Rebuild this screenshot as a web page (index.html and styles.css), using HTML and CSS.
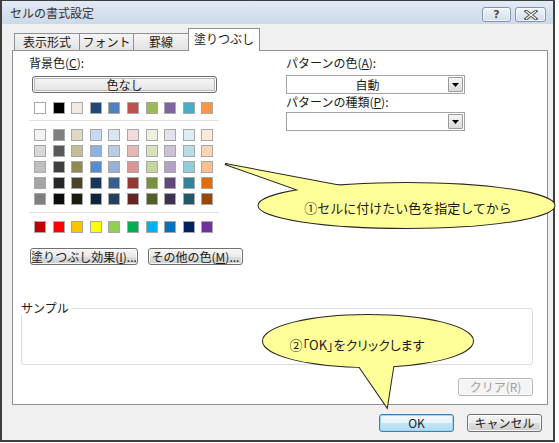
FILE: index.html
```html
<!DOCTYPE html>
<html lang="ja">
<head>
<meta charset="utf-8">
<title>セルの書式設定</title>
<link rel="stylesheet" href="styles.css">
</head>
<body>
<div class="dialog">
  <div class="titlebar">
    <span class="title">セルの書式設定</span>
    <span class="tb-btn help">?</span>
    <span class="tb-btn close">
      <svg width="14" height="10" viewBox="0 0 14 10"><path d="M2 1 L12 9 M12 1 L2 9" stroke="#555" stroke-width="3.2" stroke-linecap="square"/><path d="M2 1 L12 9 M12 1 L2 9" stroke="#f4f6f9" stroke-width="1.2"/></svg>
    </span>
  </div>
  <div class="tabs">
    <div class="tab t1">表示形式</div>
    <div class="tab t2">フォント</div>
    <div class="tab t3">罫線</div>
    <div class="tab t4 active">塗りつぶし</div>
  </div>
  <div class="panel">
    <div class="top">
      <div class="leftcol">
        <div class="label">背景色(<u>C</u>):</div>
        <div class="nocolor">色なし</div>
        <div class="swrow theme">
          <span class="sw" style="background:#FFFFFF"></span><span class="sw" style="background:#000000"></span><span class="sw" style="background:#EEECE1"></span><span class="sw" style="background:#1F497D"></span><span class="sw" style="background:#4F81BD"></span><span class="sw" style="background:#C0504D"></span><span class="sw" style="background:#9BBB59"></span><span class="sw" style="background:#8064A2"></span><span class="sw" style="background:#4BACC6"></span><span class="sw" style="background:#F79646"></span>
        </div>
        <div class="sep sep1"></div>
        <div class="swrow grid">
          <span class="sw" style="background:#F2F2F2"></span><span class="sw" style="background:#7F7F7F"></span><span class="sw" style="background:#DDD9C3"></span><span class="sw" style="background:#C6D9F0"></span><span class="sw" style="background:#DBE5F1"></span><span class="sw" style="background:#F2DCDB"></span><span class="sw" style="background:#EBF1DD"></span><span class="sw" style="background:#E5E0EC"></span><span class="sw" style="background:#DBEEF3"></span><span class="sw" style="background:#FDEADA"></span>
          <span class="sw" style="background:#D8D8D8"></span><span class="sw" style="background:#595959"></span><span class="sw" style="background:#C4BD97"></span><span class="sw" style="background:#8DB3E2"></span><span class="sw" style="background:#B8CCE4"></span><span class="sw" style="background:#E5B9B7"></span><span class="sw" style="background:#D7E3BC"></span><span class="sw" style="background:#CCC1D9"></span><span class="sw" style="background:#B7DDE8"></span><span class="sw" style="background:#FBD5B5"></span>
          <span class="sw" style="background:#BFBFBF"></span><span class="sw" style="background:#3F3F3F"></span><span class="sw" style="background:#938953"></span><span class="sw" style="background:#548DD4"></span><span class="sw" style="background:#95B3D7"></span><span class="sw" style="background:#D99694"></span><span class="sw" style="background:#C3D69B"></span><span class="sw" style="background:#B2A2C7"></span><span class="sw" style="background:#92CDDC"></span><span class="sw" style="background:#FAC08F"></span>
          <span class="sw" style="background:#A5A5A5"></span><span class="sw" style="background:#262626"></span><span class="sw" style="background:#494429"></span><span class="sw" style="background:#17365D"></span><span class="sw" style="background:#366092"></span><span class="sw" style="background:#953734"></span><span class="sw" style="background:#76923C"></span><span class="sw" style="background:#5F497A"></span><span class="sw" style="background:#31859B"></span><span class="sw" style="background:#E36C09"></span>
          <span class="sw" style="background:#7F7F7F"></span><span class="sw" style="background:#0C0C0C"></span><span class="sw" style="background:#1D1B10"></span><span class="sw" style="background:#0F243E"></span><span class="sw" style="background:#244061"></span><span class="sw" style="background:#632423"></span><span class="sw" style="background:#4F6128"></span><span class="sw" style="background:#3F3151"></span><span class="sw" style="background:#205867"></span><span class="sw" style="background:#974806"></span>
        </div>
        <div class="sep sep2"></div>
        <div class="swrow standard">
          <span class="sw" style="background:#C00000"></span><span class="sw" style="background:#FF0000"></span><span class="sw" style="background:#FFC000"></span><span class="sw" style="background:#FFFF00"></span><span class="sw" style="background:#92D050"></span><span class="sw" style="background:#00B050"></span><span class="sw" style="background:#00B0F0"></span><span class="sw" style="background:#0070C0"></span><span class="sw" style="background:#002060"></span><span class="sw" style="background:#7030A0"></span>
        </div>
        <div class="btnrow">
          <div class="btn b-effect">塗りつぶし効果(<u>I</u>)...</div>
          <div class="btn b-other">その他の色(<u>M</u>)...</div>
        </div>
      </div>
      <div class="rightcol">
        <div class="label">パターンの色(<u>A</u>):</div>
        <div class="combo c1"><span class="cval">自動</span><span class="carrow"><svg width="7" height="4" viewBox="0 0 7 4"><path d="M0 0 H7 L3.5 4 Z" fill="#000"/></svg></span></div>
        <div class="label l2">パターンの種類(<u>P</u>):</div>
        <div class="combo c2"><span class="cval"></span><span class="carrow"><svg width="7" height="4" viewBox="0 0 7 4"><path d="M0 0 H7 L3.5 4 Z" fill="#000"/></svg></span></div>
      </div>
    </div>
    <fieldset class="sample">
      <legend>サンプル</legend>
    </fieldset>
    <div class="clearrow">
      <div class="btn clear">クリア(R)</div>
    </div>
  </div>
  <div class="footer">
    <div class="btn ok">OK</div>
    <div class="btn cancel">キャンセル</div>
  </div>
</div>
<svg class="overlay" width="559" height="443" viewBox="0 0 559 443">
  <g class="co-outline">
    <polygon points="225,164 347,187 304,192"/>
    <ellipse cx="406.5" cy="205.5" rx="148" ry="22.5"/>
    <polygon points="356,362 394,362 387,407"/>
    <ellipse cx="368" cy="341" rx="105" ry="26"/>
  </g>
  <g class="co-fill">
    <polygon points="225,164 347,187 304,192"/>
    <ellipse cx="406.5" cy="205.5" rx="148" ry="22.5"/>
    <polygon points="356,362 394,362 387,407"/>
    <ellipse cx="368" cy="341" rx="105" ry="26"/>
  </g>
  <text class="co-text" x="408" y="207">①セルに付けたい色を指定してから</text>
  <text class="co-text co-text2" x="357" y="344">②「OK」をクリックします</text>
</svg>
</body>
</html>
```
FILE: styles.css
```css
* { box-sizing: border-box; }
html, body { margin: 0; padding: 0; }
body {
  width: 559px;
  height: 443px;
  background: #ffffff;
  font-family: "Noto Sans CJK JP", "Noto Sans", sans-serif;
  font-size: 12px;
  color: #1a1a1a;
  position: relative;
  overflow: hidden;
}
u { text-decoration: underline; text-underline-offset: 1px; }

.dialog {
  width: 555px;
  height: 442px;
  border: 2px solid #3f3f3f;
  border-top-width: 1px;
  background: #f0f0f0;
  display: flex;
  flex-direction: column;
}

.titlebar {
  height: 23px;
  background: linear-gradient(#e2eaf5, #cbd9ea);
  display: flex;
  align-items: flex-start;
  padding-left: 8px;
}
.title {
  line-height: 24px;
  font-size: 12px;
  color: #333;
  flex: 1;
}
.tb-btn {
  margin-top: 6px;
  height: 15px;
  border: 1px solid #8594aa;
  border-radius: 3px;
  background: linear-gradient(#f1f5fa, #d2dde9);
  display: flex;
  align-items: center;
  justify-content: center;
  box-shadow: inset 0 0 0 1px rgba(255,255,255,0.7);
}
.help {
  width: 29px;
  margin-right: 4px;
  font-family: "DejaVu Sans", sans-serif;
  font-weight: bold;
  font-size: 11px;
  color: #4a4a4a;
  line-height: 13px;
}
.close {
  width: 31px;
  margin-right: 7px;
}

.tabs {
  height: 22px;
  margin-top: 4px;
  padding-left: 12px;
  display: flex;
  align-items: flex-end;
  position: relative;
  z-index: 2;
}
.tab {
  height: 17px;
  border: 1px solid #8d9197;
  border-bottom: none;
  background: linear-gradient(#f5f5f5, #e3e3e3);
  text-align: center;
  line-height: 16px;
  font-size: 12px;
  color: #1a1a1a;
}
.t1 { width: 66px; }
.t2 { width: 55px; margin-left: -1px; }
.t3 { width: 56px; margin-left: -1px; }
.t4 { width: 72px; margin-left: -1px; }
.tab.active {
  height: 23px;
  margin-bottom: -1px;
  background: #ffffff;
  line-height: 20px;
}

.panel {
  margin-left: 10px;
  width: 536px;
  height: 355px;
  border: 1px solid #8d9197;
  background: #ffffff;
  padding: 5px 0 0 8px;
  display: flex;
  flex-direction: column;
}
.top {
  display: flex;
  height: 208px;
}
.leftcol {
  width: 241px;
  margin-left: 8px;
}
.label {
  height: 14px;
  line-height: 14px;
  font-size: 12px;
}
.nocolor {
  margin-top: 6px;
  margin-left: 3px;
  width: 185px;
  height: 17px;
  border: 1px solid #6a6a6a;
  border-radius: 3px;
  background: linear-gradient(#f8f8f8, #e2e2e2);
  box-shadow: inset 0 0 0 1px #ffffff, inset 0 0 0 2px #b8b8b8;
  text-align: center;
  line-height: 15px;
  font-size: 12px;
}
.swrow {
  margin-left: 5px;
  display: grid;
  grid-template-columns: repeat(10, 12px);
  column-gap: 6.6px;
  row-gap: 4px;
}
.theme { margin-top: 9px; }
.grid { margin-top: 8px; }
.standard { margin-top: 8px; }
.sw {
  display: block;
  width: 12px;
  height: 12px;
  border: 1px solid #a8a8a8;
}
.sep {
  width: 190px;
  height: 1px;
  background: #e2e2e2;
}
.sep1 { margin-top: 6px; }
.sep2 { margin-top: 7px; }

.btnrow {
  margin-top: 15px;
  margin-left: 1px;
  display: flex;
  gap: 10px;
}
.btn {
  height: 17px;
  border: 1px solid #707070;
  border-radius: 3px;
  background: linear-gradient(#f4f4f4 0%, #ebebeb 50%, #dddddd 51%, #cfcfcf 100%);
  box-shadow: inset 0 0 0 1px rgba(255,255,255,0.8);
  text-align: center;
  line-height: 15px;
  font-size: 12px;
  color: #1a1a1a;
}
.b-effect { width: 108px; }
.b-other { width: 95px; }

.rightcol {
  width: 179px;
  margin-left: 16px;
}
.combo {
  margin-top: 5px;
  height: 19px;
  border: 1px solid #a3a3a3;
  background: #fff;
  display: flex;
  align-items: center;
  padding-right: 1px;
}
.cval {
  flex: 1;
  text-align: center;
  font-size: 12px;
  line-height: 17px;
}
.carrow {
  width: 15px;
  height: 15px;
  border: 1px solid #9a9a9a;
  border-radius: 1px;
  background: linear-gradient(#f6f6f6, #dadada);
  display: flex;
  align-items: center;
  justify-content: center;
}
.l2 { margin-top: 1px; }
.c2 { margin-top: 3px; }

.sample {
  margin: 37px 0 0 0;
  padding: 0;
  width: 512px;
  height: 64px;
  border: 1px solid #dadde2;
  border-radius: 3px;
  min-inline-size: 0;
}
.sample legend {
  padding: 0 2px 0 0;
  margin-left: -1px;
  font-size: 12px;
  line-height: 14px;
}
.clearrow {
  width: 512px;
  margin-top: 13px;
  display: flex;
  justify-content: flex-end;
}
.clear {
  width: 75px;
  height: 18px;
  border-color: #b5b5b5;
  background: #f4f4f4;
  color: #a0a0a0;
  line-height: 16px;
}

.footer {
  margin-top: 9px;
  display: flex;
  justify-content: flex-end;
  gap: 13px;
  padding-right: 11px;
}
.ok, .cancel {
  width: 75px;
  height: 18px;
  line-height: 16px;
}
.ok {
  border-color: #3c7fb1;
  box-shadow: inset 0 0 0 1px #9fd5f5;
  background: linear-gradient(#f2f9fd 0%, #e5f3fb 50%, #c4e5f6 51%, #b2dcf2 100%);
}

.overlay {
  position: absolute;
  left: 0;
  top: 0;
  pointer-events: none;
}
.co-outline polygon, .co-outline ellipse {
  fill: #ffff99;
  stroke: #262626;
  stroke-width: 2;
}
.co-fill polygon, .co-fill ellipse {
  fill: #ffff99;
  stroke: none;
}
.co-text {
  font-family: "Noto Sans CJK JP", sans-serif;
  font-size: 13px;
  fill: #1a1a1a;
  text-anchor: middle;
  dominant-baseline: central;
}
.co-text2 {
  font-feature-settings: "palt";
}
```
